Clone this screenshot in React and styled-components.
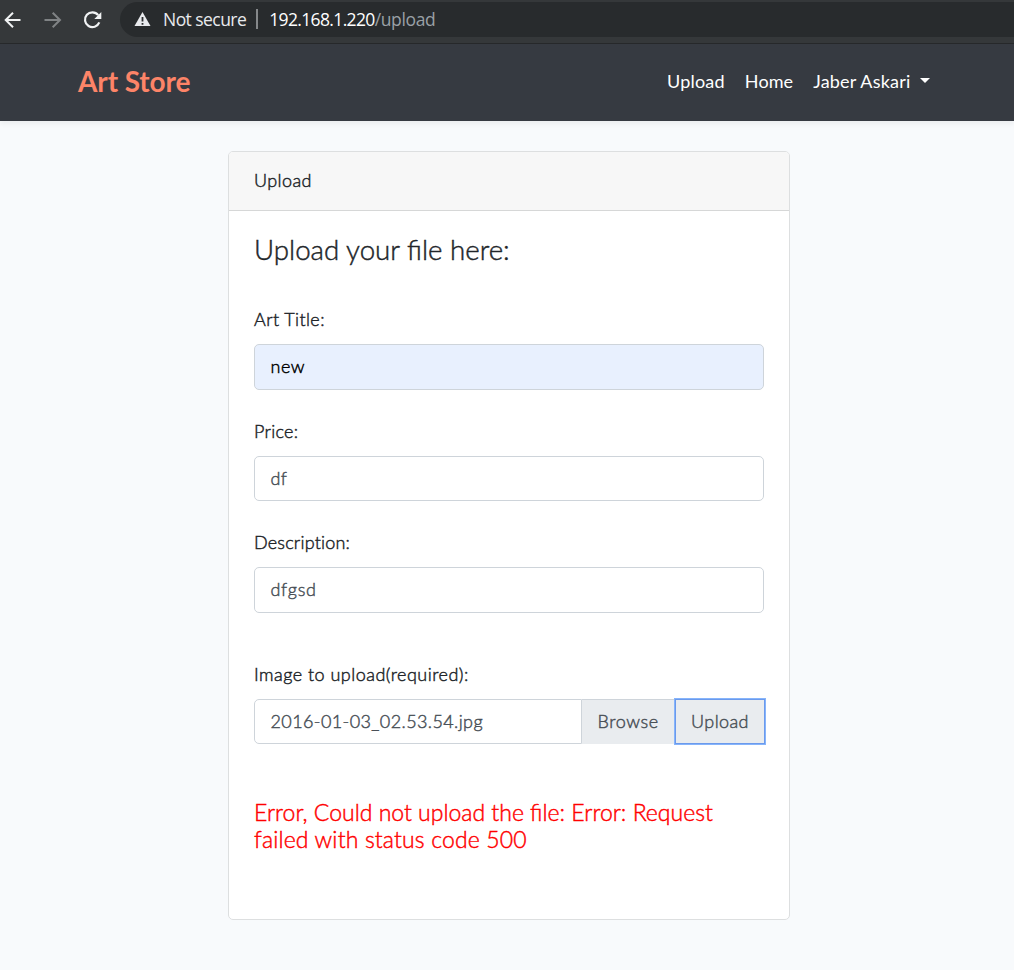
import React from "react";
import styled, { createGlobalStyle, css } from "styled-components";

const Global = createGlobalStyle`
  * { box-sizing: border-box; }
  body {
    margin: 0;
    background: #f8fafc;
    color: #212529;
    font: 400 18px/29px Lato, "Liberation Sans", sans-serif;
  }
  input, button { font: inherit; margin: 0; }
`;

const lightText = css`
  font-weight: 300;
  -webkit-text-stroke: 0.45px currentColor;
`;

const Spaced = styled.span`
  letter-spacing: ${(p) => p.$track || 0}px;
  white-space: nowrap;
`;

const BrowserBar = styled.header`
  display: flex;
  align-items: center;
  height: 44px;
  padding: 0 0 4px 2px;
  background: #35383a;
  border-bottom: 1px solid #27292b;
`;

const BarIcon = styled.svg`
  flex: none;
  width: 20px;
  height: 20px;
  margin-right: 20px;
`;

const AddressBar = styled.div`
  display: flex;
  align-items: center;
  flex: 1;
  height: 35px;
  margin-left: -2px;
  padding: 0 0 1px 14px;
  border-radius: 18px 0 0 18px;
  background: #282b2d;
  color: #e8eaed;
  font: 17.5px/24px "Open Sans", "Noto Sans", sans-serif;
`;

const Warning = styled.svg`
  width: 17px;
  height: 16px;
  margin-right: 12px;
`;

const Divider = styled.i`
  width: 2px;
  height: 20px;
  margin: 0 11px 0 10px;
  background: #85888a;
`;

const Path = styled(Spaced)`
  color: #9aa0a6;
`;

const Host = styled(Spaced)`
  color: #fff;
`;

const Navbar = styled.nav`
  display: flex;
  align-items: center;
  justify-content: space-between;
  height: 77px;
  padding: 0 84px 2px 78px;
  background: #363a41;
  box-shadow: 0 3px 5px rgba(0, 0, 0, 0.05);
`;

const Brand = styled.a`
  color: #fd8468;
  font-size: 28px;
  font-weight: 700;
  letter-spacing: -0.1px;
`;

const NavLinks = styled.div`
  display: flex;
  align-items: center;
  gap: 20px;
  color: #fff;
`;

const Dropdown = styled.span`
  display: flex;
  align-items: center;
`;

const Caret = styled.i`
  margin: -2px 0 0 9.5px;
  border: 5.5px solid transparent;
  border-top-color: #fff;
  border-bottom: 0;
`;

const Card = styled.section`
  width: 562px;
  height: 769px;
  margin: 30px 0 0 228px;
  border: 1px solid #dddfe0;
  border-radius: 5px;
  background: #fff;
  overflow: hidden;
`;

const CardHeader = styled.div`
  height: 59px;
  padding: 14px 25px;
  border-bottom: 1px solid #d6d7d7;
  background: #f7f7f7;
  ${lightText}
`;

const CardBody = styled.form`
  padding: 24px 25px;
  ${lightText}
`;

const Title = styled.h3`
  height: 32px;
  margin: 0 0 38px;
  font-size: 27.7px;
  line-height: 29px;
  font-weight: 300;
`;

const Field = styled.div`
  margin-bottom: ${(p) => p.$gap || 27}px;
`;

const Label = styled.label`
  display: block;
  height: 29px;
  margin-bottom: 10px;
`;

const Control = styled.div`
  height: 45.5px;
  padding: 7px 15.5px;
  border: 1px solid #ced4da;
  border-radius: 5px;
  background: ${(p) => (p.$autofill ? "#e8f0fe" : "#fff")};
  color: ${(p) => (p.$autofill ? "#000" : "#495057")};
`;

const FileGroup = styled.div`
  display: flex;
`;

const FileName = styled(Control)`
  flex: none;
  width: 328px;
  border-radius: 5px 0 0 5px;
`;

const Browse = styled.div`
  flex: none;
  width: 93px;
  height: 45.5px;
  padding: 7px 15.5px;
  border-top: 1px solid #ced4da;
  background: #e9ecef;
  color: #495057;
`;

const UploadButton = styled.button`
  flex: none;
  width: 90px;
  height: 45.5px;
  padding: 0;
  border: 1px solid #6b9aec;
  background: #e9ecef;
  color: #495057;
  box-shadow: 0 0 0 1px #86b4fb;
  -webkit-text-stroke: inherit;
`;

const ErrorText = styled.h4`
  margin: 55px 0 0;
  color: #f00;
  font-size: 23px;
  line-height: 27px;
  font-weight: 300;
`;

const fields = [
  { label: "Art Title:", value: "new", track: 0.4, vtrack: 0.5, autofill: true },
  { label: "Price:", value: "df", track: 0.3, vtrack: 0.4 },
  { label: "Description:", value: "dfgsd", track: 0.2, vtrack: 0.7, gap: 47 },
];

export default function App() {
  return (
    <>
      <Global />
      <BrowserBar>
        <BarIcon viewBox="0 0 20 20" fill="none" stroke="#f1f3f4" strokeWidth="2">
          <path d="M18.5 10H4M11 2.7 3.7 10l7.3 7.3" />
        </BarIcon>
        <BarIcon viewBox="0 0 20 20" fill="none" stroke="#808385" strokeWidth="2">
          <path d="M2.5 10H17M10.7 2.7 18 10l-7.3 7.3" />
        </BarIcon>
        <BarIcon viewBox="0 0 20 20" fill="none" stroke="#f1f3f4" strokeWidth="2.2">
          <path d="M16.2 5.1A7.4 7.4 0 1 0 17.3 12.4" />
          <path d="M19.3 2v7h-7z" fill="#f1f3f4" stroke="none" />
        </BarIcon>
        <AddressBar>
          <Warning viewBox="0 0 17 16">
            <path d="M8.5 1 16.5 15H.5z" fill="#e8eaed" />
            <path d="M8.5 6v4.5M8.5 12v1.7" stroke="#282b2d" strokeWidth="1.8" />
          </Warning>
          <Spaced $track={-0.55}>Not secure</Spaced>
          <Divider />
          <Host $track={-0.65}>192.168.1.220</Host>
          <Path $track={-0.35}>/upload</Path>
        </AddressBar>
      </BrowserBar>
      <Navbar>
        <Brand>Art Store</Brand>
        <NavLinks>
          <Spaced $track={0.2}>Upload</Spaced>
          <Spaced $track={0.1}>Home</Spaced>
          <Dropdown>
            <Spaced $track={0.2}>Jaber Askari</Spaced>
            <Caret />
          </Dropdown>
        </NavLinks>
      </Navbar>
      <Card>
        <CardHeader>
          <Spaced $track={0.4}>Upload</Spaced>
        </CardHeader>
        <CardBody>
          <Title>
            <Spaced>Upload your file here:</Spaced>
          </Title>
          {fields.map((f) => (
            <Field key={f.label} $gap={f.gap}>
              <Label>
                <Spaced $track={f.track}>{f.label}</Spaced>
              </Label>
              <Control $autofill={f.autofill}>
                <Spaced $track={f.vtrack}>{f.value}</Spaced>
              </Control>
            </Field>
          ))}
          <Label>
            <Spaced $track={0.48}>Image to upload(required):</Spaced>
          </Label>
          <FileGroup>
            <FileName>
              <Spaced $track={0.4}>2016-01-03_02.53.54.jpg</Spaced>
            </FileName>
            <Browse>
              <Spaced $track={0.6}>Browse</Spaced>
            </Browse>
            <UploadButton type="button">
              <Spaced $track={0.4}>Upload</Spaced>
            </UploadButton>
          </FileGroup>
          <ErrorText>
            <Spaced>Error, Could not upload the file: Error: Request</Spaced>
            <br />
            <Spaced $track={0.16}>failed with status code 500</Spaced>
          </ErrorText>
        </CardBody>
      </Card>
    </>
  );
}
